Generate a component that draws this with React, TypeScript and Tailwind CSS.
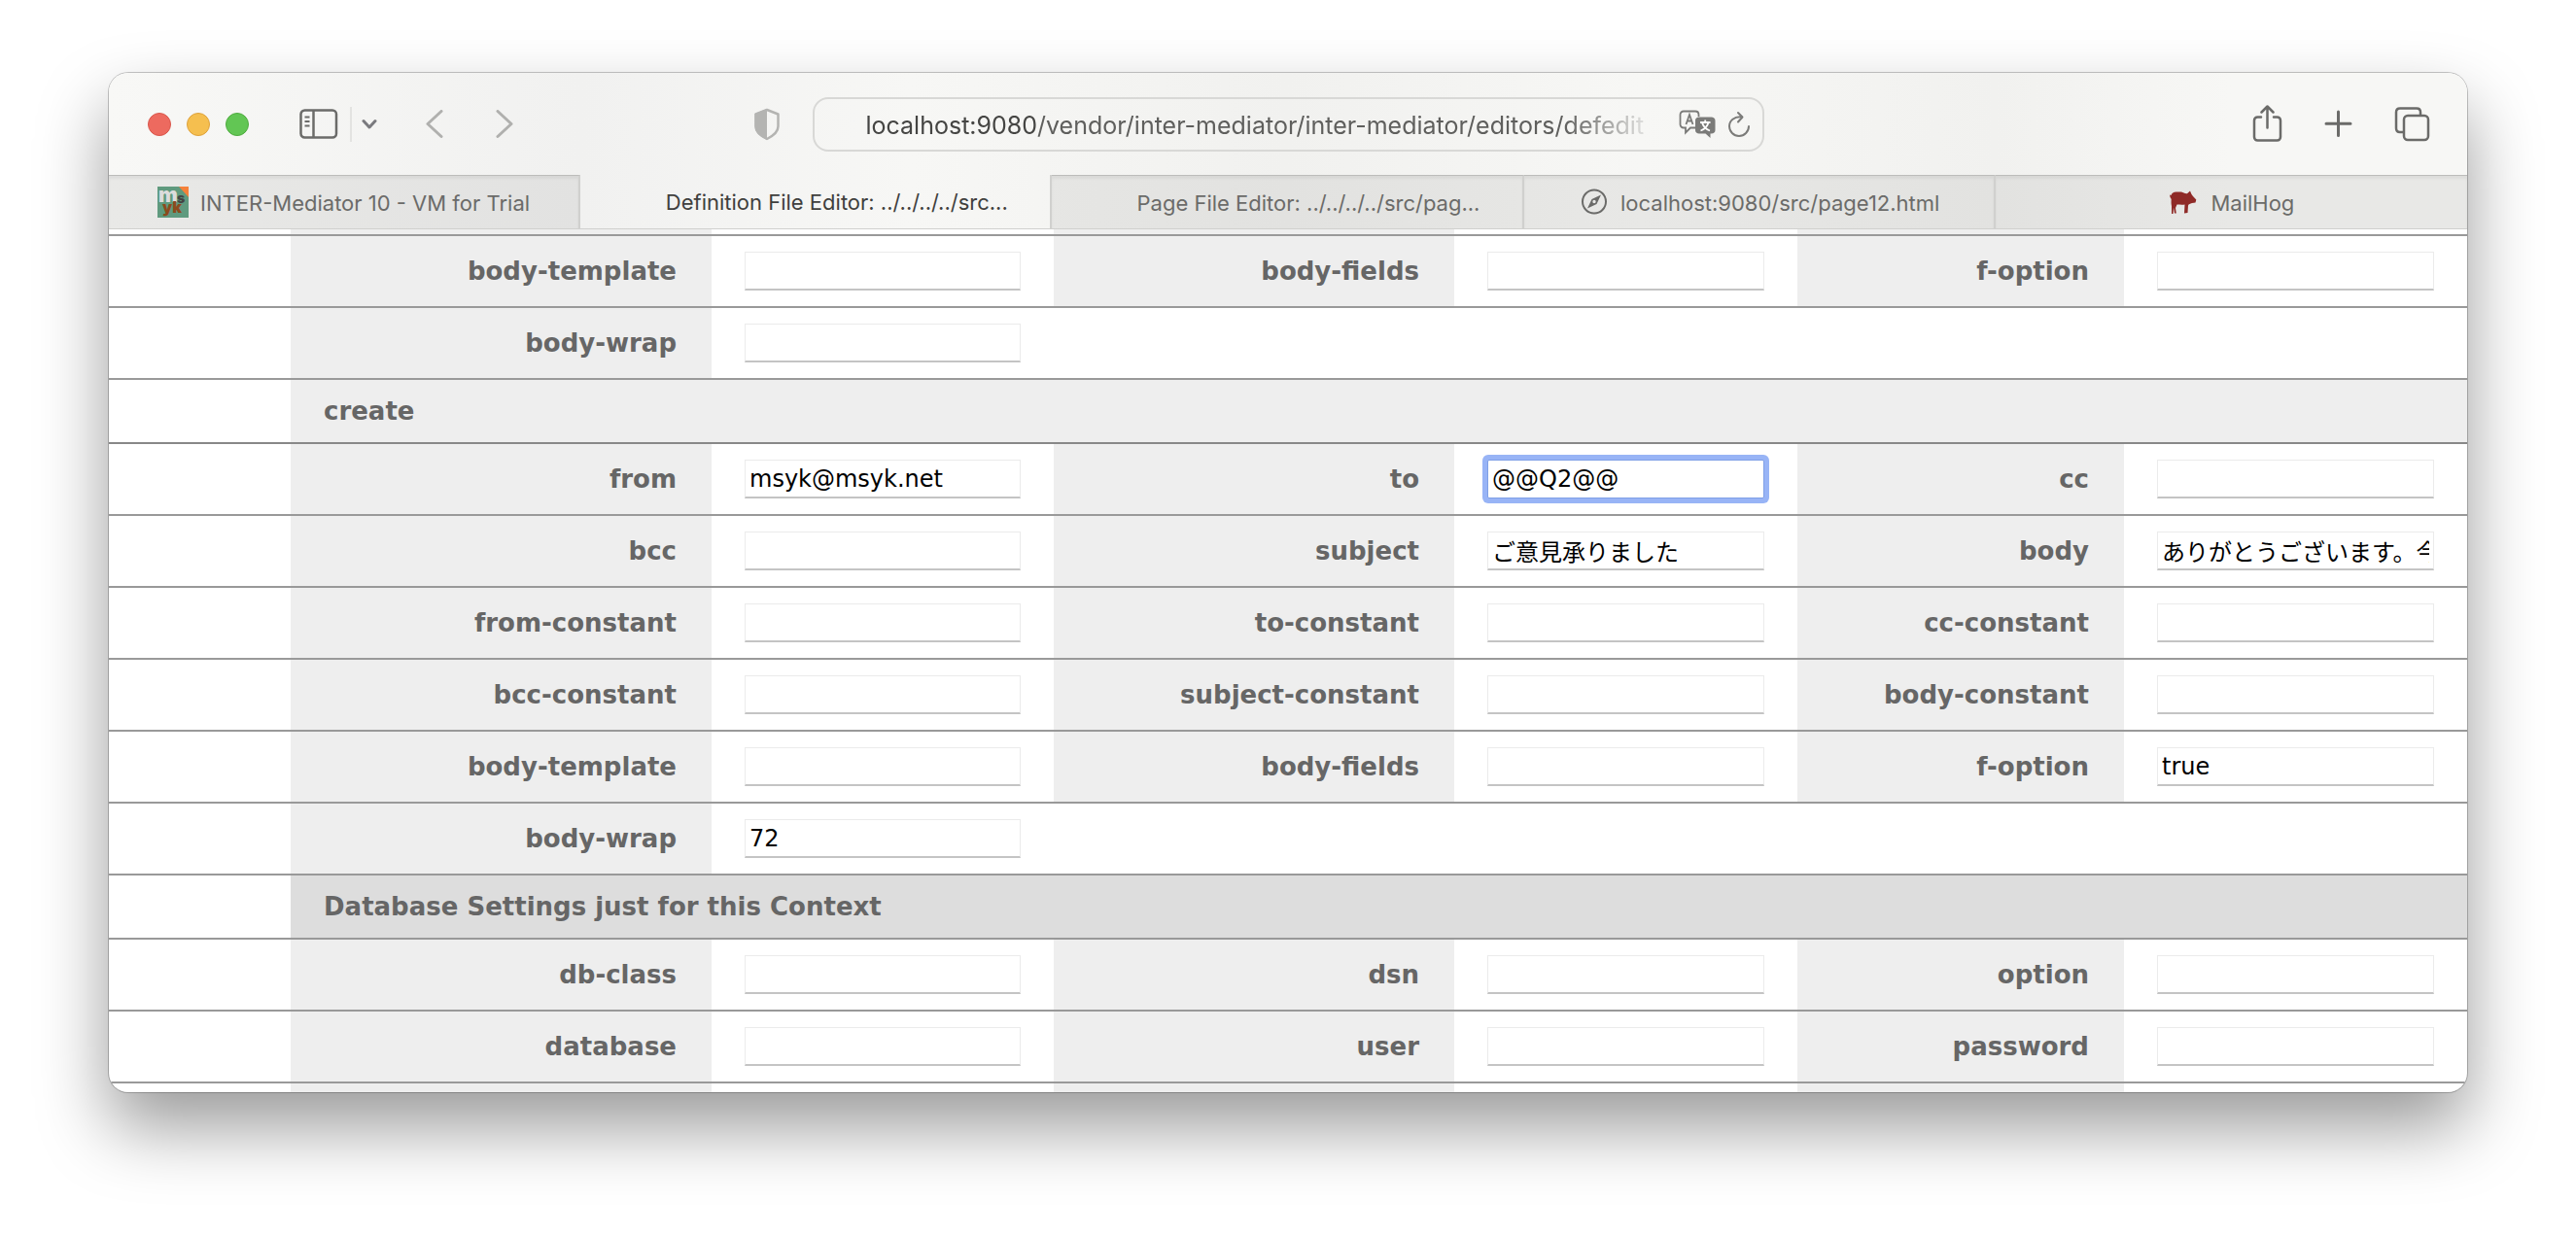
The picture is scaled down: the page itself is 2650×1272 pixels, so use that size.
import type { ReactNode } from "react";

type TField = {
  label: string;
  value?: string;
  focused?: boolean;
};

type TRow = {
  id: string;
  heading?: string;
  tone?: "light" | "dark";
  fields?: TField[];
};

type TTab = {
  title: string;
  active?: boolean;
  icon?: ReactNode;
};

const rows: TRow[] = [
  {
    id: "read-body",
    fields: [
      { label: "body-template" },
      { label: "body-fields" },
      { label: "f-option" },
    ],
  },
  { id: "read-wrap", fields: [{ label: "body-wrap" }] },
  { id: "create", heading: "create", tone: "light" },
  {
    id: "create-from",
    fields: [
      { label: "from", value: "msyk@msyk.net" },
      { label: "to", value: "@@Q2@@", focused: true },
      { label: "cc" },
    ],
  },
  {
    id: "create-bcc",
    fields: [
      { label: "bcc" },
      { label: "subject", value: "ご意見承りました" },
      { label: "body", value: "ありがとうございます。今後" },
    ],
  },
  {
    id: "create-from-constant",
    fields: [
      { label: "from-constant" },
      { label: "to-constant" },
      { label: "cc-constant" },
    ],
  },
  {
    id: "create-bcc-constant",
    fields: [
      { label: "bcc-constant" },
      { label: "subject-constant" },
      { label: "body-constant" },
    ],
  },
  {
    id: "create-body",
    fields: [
      { label: "body-template" },
      { label: "body-fields" },
      { label: "f-option", value: "true" },
    ],
  },
  { id: "create-wrap", fields: [{ label: "body-wrap", value: "72" }] },
  {
    id: "database",
    heading: "Database Settings just for this Context",
    tone: "dark",
  },
  {
    id: "db-class",
    fields: [{ label: "db-class" }, { label: "dsn" }, { label: "option" }],
  },
  {
    id: "db-user",
    fields: [{ label: "database" }, { label: "user" }, { label: "password" }],
  },
];

const MsykIcon = () => (
  <svg viewBox="0 0 32 32" className="size-8 shrink-0 overflow-visible">
    <rect width="32" height="32" fill="#5f9a7e" />
    <path d="M22 0H32V11Z" fill="#f5813a" />
    <text fontWeight="900" fontFamily="Inter">
      <tspan x="1" y="16" fontSize="21" fill="#dcdcdc">
        m
      </tspan>
      <tspan x="20" y="17" fontSize="14" fill="#444">
        s
      </tspan>
      <tspan x="5" y="27" fontSize="16" fill="#8d4a1d">
        yk
      </tspan>
    </text>
  </svg>
);

const CompassIcon = () => (
  <svg viewBox="0 0 32 32" className="size-8 shrink-0" fill="none">
    <circle cx="17" cy="15.500" r="12" stroke="#6b6b69" strokeWidth="2" />
    <path
      d="M24 8.500 19.500 18 10 22.500 14.500 13Z M17 13.800a1.700 1.700 0 1 0 0 3.400 1.700 1.700 0 0 0 0-3.400Z"
      fill="#6b6b69"
      fillRule="evenodd"
    />
  </svg>
);

const HogIcon = () => (
  <svg viewBox="0 0 32 32" className="size-8 shrink-0" fill="#8f2a27">
    <path d="M2 8.500L3.500 9C4 7 6 5.500 8.500 5.500L14 5.500C16 5.800 17.500 7.500 20 7.200L23 4.500L24.500 8L26 10L29.300 13.500L28.500 16.500L25 17C23 17.500 21.500 18 21 19.500L20.500 27L17 27.500L17.500 18.500C14.500 19 12 18.500 9.500 18.500L8 22L8.800 27.500H7L6 21.500L5.500 28H4L4 20C3.400 17 3.600 15 3.700 13L2.500 11Z" />
  </svg>
);

const tabs: TTab[] = [
  { title: "INTER-Mediator 10 - VM for Trial", icon: <MsykIcon /> },
  { title: "Definition File Editor: ../../../../src...", active: true },
  { title: "Page File Editor: ../../../../src/pag..." },
  { title: "localhost:9080/src/page12.html", icon: <CompassIcon /> },
  { title: "MailHog", icon: <HogIcon /> },
];

function Toolbar() {
  return (
    <div className="grid h-[105px] grid-cols-[1fr_auto_1fr] items-center">
      <div className="flex items-center pr-[33px] pl-10">
        <div className="flex gap-4">
          <button aria-label="Close" className="size-6 rounded-full border border-[#d9574c] bg-[#ed6a5f]" />
          <button aria-label="Minimize" className="size-6 rounded-full border border-[#dea23c] bg-[#f5bf4f]" />
          <button aria-label="Zoom" className="size-6 rounded-full border border-[#4fab3f] bg-[#62c654]" />
        </div>
        <button aria-label="Sidebar" className="ml-[52px]">
          <svg width="40" height="32" viewBox="0 0 40 32" fill="none" stroke="#6b6b69" strokeWidth="2.500">
            <rect x="1.500" y="1.500" width="36.500" height="28" rx="4" />
            <path d="M14.500 2V30" />
            <path d="M5.500 8.500H10.500M5.500 13H10.500M5.500 17.500H10.500" strokeWidth="1.800" />
          </svg>
        </button>
        <span className="ml-3 h-9 w-0.5 bg-[#e3e3e1]" />
        <button aria-label="Tab groups" className="ml-2.5">
          <svg width="16" height="12" viewBox="0 0 16 12" fill="none" stroke="#7a7a7e" strokeWidth="3" strokeLinecap="round" strokeLinejoin="round">
            <path d="M2 2.500 8 9 14 2.500" />
          </svg>
        </button>
        <button aria-label="Back" className="ml-[50px]">
          <svg width="18" height="30" viewBox="0 0 18 30" fill="none" stroke="#b0b0ae" strokeWidth="3" strokeLinecap="round" strokeLinejoin="round">
            <path d="M16 1.500 2 14.500 16 27.500" />
          </svg>
        </button>
        <button aria-label="Forward" className="ml-[54px]">
          <svg width="18" height="30" viewBox="0 0 18 30" fill="none" stroke="#b0b0ae" strokeWidth="3" strokeLinecap="round" strokeLinejoin="round">
            <path d="M2 1.500 16 14.500 2 27.500" />
          </svg>
        </button>
        <button aria-label="Privacy report" className="ml-auto">
          <svg width="28" height="34" viewBox="0 0 28 34" fill="none">
            <path d="M14 2 25.500 6.500V19C25.500 25 20 29 14 32 8 29 2.500 25 2.500 19V6.500Z" stroke="#b4b4b2" strokeWidth="2.500" strokeLinejoin="round" />
            <path d="M14 1 1.500 6V19C1.500 26 8 30 14 33Z" fill="#b4b4b2" />
          </svg>
        </button>
      </div>

      <div className="flex h-14 w-[979px] items-center rounded-2xl border-2 border-[#d8d8d6] pr-3 pl-[53px]">
        <a
          href="#"
          className="w-[816px] overflow-hidden mask-r-from-88% pt-1 text-[25px] whitespace-nowrap text-[#5f5f5d]"
        >
          <span className="text-[#454543]">localhost:9080</span>
          /vendor/inter-mediator/inter-mediator/editors/defedit
        </a>
        <button aria-label="Translate" className="ml-auto">
          <svg width="38" height="30" viewBox="0 0 38 30" fill="none">
            <path d="M17 18.500H12L7 23.500V18.500H5C3 18.500 1.500 17 1.500 15V5C1.500 3 3 1.500 5 1.500H17C19 1.500 20.500 3 20.500 5V7" stroke="#7b7b79" strokeWidth="1.800" />
            <path d="M7.500 15 11 5 14.500 15M8.800 11.500H13.200" stroke="#7b7b79" strokeWidth="1.800" />
            <path d="M21 7.500H33.500C35.700 7.500 37.500 9 37.500 11V21C37.500 23 36 24.500 33.500 24.500H32.500V29L27.500 24.500H21C18.700 24.500 17 23 17 21V11C17 9 18.700 7.500 21 7.500Z" fill="#7b7b79" />
            <path d="M22 13H32.500M27.200 10.500V13M30.500 13C29.500 17 26.500 20 22.500 21.500M24 13C25 17 28 20 32 21.500" stroke="#fff" strokeWidth="1.800" />
          </svg>
        </button>
        <button aria-label="Reload" className="ml-3">
          <svg width="24" height="28" viewBox="0 0 24 28" fill="none" stroke="#7b7b79" strokeWidth="2" strokeLinecap="round" strokeLinejoin="round">
            <path d="M15 6.500C7 5.500 2 10.500 2 16A10 10 0 0 0 22 16" />
            <path d="M11 2 15.500 6.500 11 11.500" />
          </svg>
        </button>
      </div>

      <div className="flex items-center justify-end pr-[38px]">
        <button aria-label="Share">
          <svg width="32" height="40" viewBox="0 0 32 40" fill="none" stroke="#6b6b69" strokeWidth="2.500" strokeLinecap="round" strokeLinejoin="round">
            <path d="M10 12.500H6.500C4.500 12.500 3 14 3 16V33C3 35 4.500 36.500 6.500 36.500H26.500C28.500 36.500 30 35 30 33V16C30 14 28.500 12.500 26.500 12.500H23" />
            <path d="M16.500 23.500V2M10.500 7.500 16.500 1.500 22.500 7.500" />
          </svg>
        </button>
        <button aria-label="New tab" className="ml-[42px]">
          <svg width="30" height="30" viewBox="0 0 30 30" fill="none" stroke="#6b6b69" strokeWidth="3" strokeLinecap="round">
            <path d="M15.500 2V26.500M3 14.200H28" />
          </svg>
        </button>
        <button aria-label="Tab overview" className="ml-[42px]">
          <svg width="38" height="38" viewBox="0 0 38 38" fill="none" stroke="#6b6b69" strokeWidth="2.500">
            <rect x="11" y="10" width="25" height="25" rx="4" />
            <path d="M11 27H7C4.500 27 3 25.500 3 23V6.500C3 4 4.500 2.500 7 2.500H24C26.500 2.500 28 4 28 6.500V10" />
          </svg>
        </button>
      </div>
    </div>
  );
}

function TabBar() {
  return (
    <nav className="grid h-14 grid-cols-5 border-b border-[#d0d0ce]">
      {tabs.map((tab) => (
        <a
          key={tab.title}
          href="#"
          className={
            tab.active
              ? "flex items-center justify-center gap-3 border-r-2 border-[#d0d0ce] text-[22px] whitespace-nowrap text-[#3f3f3d]"
              : "flex items-center justify-center gap-3 border-t border-r-2 border-t-[#bcbcba] border-r-[#d0d0ce] bg-black/6 text-[22px] whitespace-nowrap text-[#6b6b69] inset-shadow-[0_3px_3px_rgba(0,0,0,0.05)] last:border-r-0"
          }
        >
          {tab.icon ?? <span className="size-8 shrink-0" />}
          <span className="pt-0.5">{tab.title}</span>
        </a>
      ))}
    </nav>
  );
}

function FieldCells({ id, field }: { id: string; field: TField }) {
  const inputId = `${id}-${field.label}`;
  return (
    <>
      <th scope="row" className="bg-[#eee] px-9 text-right align-middle text-[26px] font-bold text-[#666]">
        <label htmlFor={inputId}>{field.label}</label>
      </th>
      <td className="px-[34px] align-middle">
        <input
          id={inputId}
          type="text"
          defaultValue={field.value}
          className={
            field.focused
              ? "block h-10 w-full rounded-xs border border-[#7f9fe6] bg-white px-1 text-2xl text-black ring-5 ring-[#98b4f6] outline-none"
              : "block h-10 w-full border border-b-2 border-[#ebebeb] border-b-[#c4c4c4] bg-white px-1 text-2xl text-black outline-none"
          }
        />
      </td>
    </>
  );
}

function SettingsTable() {
  return (
    <table className="w-full table-fixed border-collapse font-['DejaVu_Sans','Noto_Sans_CJK_JP',sans-serif]">
      <colgroup>
        <col className="w-[187px]" />
        <col className="w-[433px]" />
        <col className="w-[352px]" />
        <col className="w-[412px]" />
        <col className="w-[353px]" />
        <col className="w-[336px]" />
        <col className="w-[353px]" />
      </colgroup>
      <tbody>
        <EdgeRow className="h-1.5 border-b-2 border-[#999]" />
        {rows.map((row) =>
          row.heading ? (
            <tr
              key={row.id}
              className={
                row.tone === "dark"
                  ? "h-[66px] border-b-2 border-[#999]"
                  : "h-[66px] border-b-2 border-[#888]"
              }
            >
              <td />
              <th
                colSpan={6}
                className={
                  row.tone === "dark"
                    ? "bg-[#ddd] px-[34px] text-left text-[26px] font-bold text-[#666]"
                    : "bg-[#eee] px-[34px] text-left text-[26px] font-bold text-[#666]"
                }
              >
                {row.heading}
              </th>
            </tr>
          ) : (
            <tr key={row.id} className="h-[74px] border-b-2 border-[#999]">
              <td />
              {row.fields?.map((field) => (
                <FieldCells key={field.label} id={row.id} field={field} />
              ))}
              {row.fields?.length === 1 && <td colSpan={4} />}
            </tr>
          )
        )}
        <EdgeRow className="h-2.5" />
      </tbody>
    </table>
  );
}

// slice of a row that is scrolled out of view
function EdgeRow({ className }: { className: string }) {
  return (
    <tr className={className}>
      <td />
      <td className="bg-[#eee]" />
      <td />
      <td className="bg-[#eee]" />
      <td />
      <td className="bg-[#eee]" />
      <td />
    </tr>
  );
}

export default function App() {
  return (
    <div className="min-h-screen overflow-hidden bg-white px-28 pt-[75px] pb-36 font-['Inter',sans-serif]">
      <div className="overflow-hidden rounded-[20px] bg-white shadow-[0_0_0_1px_rgba(0,0,0,0.22),0_36px_72px_rgba(0,0,0,0.4)]">
        <div className="bg-[linear-gradient(90deg,#f8f8f6,#f1f1f0_20%,#f7f7f5_34%,#f1f1ef_50%,#f7f7f5_65%,#f1f1ef_80%,#f7f7f5_90%)]">
          <Toolbar />
          <TabBar />
        </div>
        <SettingsTable />
      </div>
    </div>
  );
}
